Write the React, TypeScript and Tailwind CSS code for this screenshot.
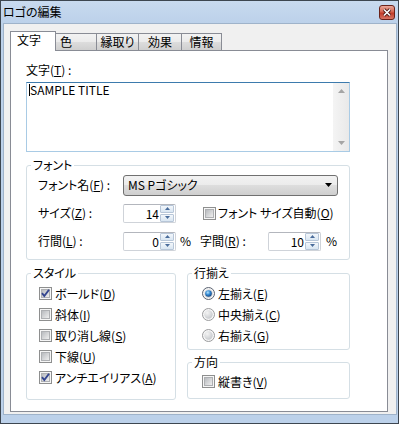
import React from "react";

const K = ({ c }: { c: string }) => (
  <span className="underline underline-offset-[1px]">{c}</span>
);

const CheckBox = ({ checked = false }: { checked?: boolean }) => (
  <svg width="13" height="13" viewBox="0 0 13 13" className="shrink-0">
    <defs>
      <linearGradient id="cbIn" x1="0" y1="0" x2="1" y2="1">
        <stop offset="0" stopColor="#b4b7bb" />
        <stop offset="1" stopColor="#f2f2f2" />
      </linearGradient>
    </defs>
    <rect x="0.5" y="0.5" width="12" height="12" fill="#f6f6f6" stroke="#8e8f8f" />
    <rect x="2.5" y="2.5" width="8" height="8" fill="url(#cbIn)" stroke="#aeb0b3" />
    {checked && (
      <path
        d="M3 6.2 L5.3 9 L10 2.8"
        fill="none"
        stroke="#33458f"
        strokeWidth="1.9"
      />
    )}
  </svg>
);

const Radio = ({ checked = false }: { checked?: boolean }) => (
  <svg width="13" height="13" viewBox="0 0 13 13" className="shrink-0">
    <defs>
      <radialGradient id="rbIn" cx="0.35" cy="0.3" r="0.8">
        <stop offset="0" stopColor="#f4f4f4" />
        <stop offset="1" stopColor="#c2c5c9" />
      </radialGradient>
      <radialGradient id="rbSel" cx="0.4" cy="0.35" r="0.7">
        <stop offset="0" stopColor="#b5e4ff" />
        <stop offset="0.5" stopColor="#2f86d0" />
        <stop offset="1" stopColor="#123f7a" />
      </radialGradient>
    </defs>
    <circle cx="6.5" cy="6.5" r="6" fill="#f6f6f6" stroke={checked ? "#5a6270" : "#9a9b9d"} />
    <circle cx="6.5" cy="6.5" r="4.2" fill="url(#rbIn)" />
    {checked && <circle cx="6.5" cy="6.5" r="3.3" fill="url(#rbSel)" />}
  </svg>
);

const SpinBtn = ({ up = false }: { up?: boolean }) => (
  <div className="flex h-[8px] items-center justify-center rounded-[1px] border border-[#b7c6d8] bg-[linear-gradient(#f3f7fb,#d9e6f2)]">
    <svg width="5" height="3" viewBox="0 0 5 3">
      {up ? (
        <path d="M0 3 L2.5 0 L5 3 Z" fill="#4a6c9b" />
      ) : (
        <path d="M0 0 L2.5 3 L5 0 Z" fill="#4a6c9b" />
      )}
    </svg>
  </div>
);

const Spin = ({ value }: { value: string }) => (
  <div className="flex h-[19px] w-[53px] shrink-0 rounded-[2px] border border-[#cfd3d9] border-t-[#b3b6bd] bg-white">
    <div className="flex-1 pr-[1px] text-right leading-[17px]">{value}</div>
    <div className="flex w-[15px] flex-col gap-px pr-px">
      <SpinBtn up />
      <SpinBtn />
    </div>
  </div>
);

const Group = ({
  title,
  className = "",
  children,
}: {
  title: string;
  className?: string;
  children: React.ReactNode;
}) => (
  <fieldset className={`rounded-[3px] border border-[#d5dfe5] ${className}`}>
    <legend className="ml-[4px] px-[2px] leading-[14px]">{title}</legend>
    {children}
  </fieldset>
);

const CheckRow = ({ checked, children }: { checked?: boolean; children: React.ReactNode }) => (
  <div className="flex h-[21px] items-center gap-[3px]">
    <CheckBox checked={checked} />
    <span>{children}</span>
  </div>
);

const RadioRow = ({ checked, children }: { checked?: boolean; children: React.ReactNode }) => (
  <div className="flex h-[21px] items-center gap-[3px]">
    <Radio checked={checked} />
    <span>{children}</span>
  </div>
);

export default function App() {
  return (
    <div className="flex h-[424px] w-[399px] flex-col border border-[#3d4650] bg-[#bcd1ea] font-['Noto_Sans_CJK_JP',sans-serif] text-[12px] leading-[14px] text-black [font-feature-settings:'palt']">
      {/* title bar */}
      <div className="flex h-[22px] items-center justify-between bg-[linear-gradient(#c8daef,#bcd1ea)] pl-[2px] pr-[3px]">
        <span>ロゴの編集</span>
        <div className="flex h-[15px] w-[16px] items-center justify-center rounded-[3px] border border-[#6b2219] bg-[linear-gradient(#eaa79a,#d4644f_45%,#c13a28_55%,#d77563)]">
          <svg width="10" height="9" viewBox="0 0 10 9">
            <path d="M2 1.5 L8 7.5 M8 1.5 L2 7.5" stroke="#4b1a13" strokeWidth="3.2" />
            <path d="M2 1.5 L8 7.5 M8 1.5 L2 7.5" stroke="#ffffff" strokeWidth="1.6" />
          </svg>
        </div>
      </div>

      {/* client area */}
      <div className="ml-[2px] mr-[1px] flex h-[392px] flex-col border border-[#9fb3ca] bg-[#f0f0f0] pl-[6px] pt-[7px]">
        {/* tabs */}
        <div className="flex h-[19px] items-end">
          <div className="relative z-10 -mb-px flex h-[20px] w-[46px] items-start border border-b-0 border-[#898c95] bg-white pl-[6px] pt-px">
            文字
          </div>
          <div className="-ml-px flex h-[17px] w-[42px] items-center border border-b-0 border-[#898c95] bg-[linear-gradient(#f2f2f2,#ebebeb_50%,#dddddd_50%,#cfcfcf)] pl-[4px]">
            色
          </div>
          <div className="-ml-px flex h-[17px] w-[43px] items-center justify-center border border-b-0 border-[#898c95] bg-[linear-gradient(#f2f2f2,#ebebeb_50%,#dddddd_50%,#cfcfcf)]">
            縁取り
          </div>
          <div className="-ml-px flex h-[17px] w-[44px] items-center justify-center border border-b-0 border-[#898c95] bg-[linear-gradient(#f2f2f2,#ebebeb_50%,#dddddd_50%,#cfcfcf)]">
            効果
          </div>
          <div className="-ml-px flex h-[17px] w-[41px] items-center justify-center border border-b-0 border-[#898c95] bg-[linear-gradient(#f2f2f2,#ebebeb_50%,#dddddd_50%,#cfcfcf)]">
            情報
          </div>
        </div>

        {/* tab panel */}
        <div className="flex h-[362px] w-[378px] flex-col border border-[#898c95] bg-white pl-[15px] pt-[12px]">
          <div>
            文字(<K c="T" />) :
          </div>

          {/* text box */}
          <div className="mt-[5px] flex h-[70px] w-[324px] border border-[#a9cbe5] border-t-[#3d7bad] bg-white">
            <div className="flex flex-1 items-start pl-[2px] leading-[13px]">
              <span className="mt-px inline-block h-[12px] w-px bg-black" />
              <span>SAMPLE TITLE</span>
            </div>
            <div className="flex w-[16px] flex-col items-center justify-between bg-[linear-gradient(90deg,#f4f4f4,#e9e9e9)] py-[6px]">
              <svg width="7" height="4" viewBox="0 0 7 4">
                <path d="M0 4 L3.5 0 L7 4 Z" fill="#a5a5a5" />
              </svg>
              <svg width="7" height="4" viewBox="0 0 7 4">
                <path d="M0 0 L3.5 4 L7 0 Z" fill="#a5a5a5" />
              </svg>
            </div>
          </div>

          {/* font group */}
          <Group title="フォント" className="mt-[6px] w-[324px]">
            <div className="pb-[8px] pl-[11px] pt-[3px]">
              <div className="flex h-[20px] items-center">
                <span className="w-[85px] shrink-0">
                  フォント名(<K c="F" />) :
                </span>
                <div className="flex h-[21px] w-[215px] items-center justify-between rounded-[3px] border border-[#707070] bg-[linear-gradient(#f2f2f2,#ebebeb_50%,#dddddd_50%,#cfcfcf)] pl-[4px] pr-[5px]">
                  <span>MS Pゴシック</span>
                  <svg width="7" height="4" viewBox="0 0 7 4">
                    <path d="M0 0 L7 0 L3.5 4 Z" fill="#000" />
                  </svg>
                </div>
              </div>
              <div className="mt-[8px] flex h-[20px] items-center">
                <div className="flex w-[162px] items-center">
                  <span className="w-[85px] shrink-0">
                    サイズ(<K c="Z" />) :
                  </span>
                  <Spin value="14" />
                </div>
                <div className="ml-[3px] flex items-center gap-[2px]">
                  <CheckBox />
                  <span>
                    フォント サイズ自動(<K c="O" />)
                  </span>
                </div>
              </div>
              <div className="mt-[8px] flex h-[20px] items-center">
                <div className="flex w-[162px] items-center">
                  <span className="w-[85px] shrink-0">
                    行間(<K c="L" />) :
                  </span>
                  <Spin value="0" />
                  <span className="ml-[4px]">%</span>
                </div>
                <span className="w-[68px] shrink-0">
                  字間(<K c="R" />) :
                </span>
                <Spin value="10" />
                <span className="ml-[5px]">%</span>
              </div>
            </div>
          </Group>

          {/* bottom groups */}
          <div className="mt-[6px] flex items-start gap-[11px]">
            <Group title="スタイル" className="w-[150px]">
              <div className="pb-[11px] pl-[12px] pt-[3px]">
                <CheckRow checked>
                  ボールド(<K c="D" />)
                </CheckRow>
                <CheckRow>
                  斜体(<K c="I" />)
                </CheckRow>
                <CheckRow>
                  取り消し線(<K c="S" />)
                </CheckRow>
                <CheckRow>
                  下線(<K c="U" />)
                </CheckRow>
                <CheckRow checked>
                  アンチエイリアス(<K c="A" />)
                </CheckRow>
              </div>
            </Group>
            <div className="flex w-[163px] flex-col">
              <Group title="行揃え">
                <div className="pb-[3px] pl-[14px] pt-[3px]">
                  <RadioRow checked>
                    左揃え(<K c="E" />)
                  </RadioRow>
                  <RadioRow>
                    中央揃え(<K c="C" />)
                  </RadioRow>
                  <RadioRow>
                    右揃え(<K c="G" />)
                  </RadioRow>
                </div>
              </Group>
              <Group title="方向" className="mt-[5px]">
                <div className="pb-[6px] pl-[14px] pt-[2px]">
                  <CheckRow>
                    縦書き(<K c="V" />)
                  </CheckRow>
                </div>
              </Group>
            </div>
          </div>
        </div>
      </div>
    </div>
  );
}
